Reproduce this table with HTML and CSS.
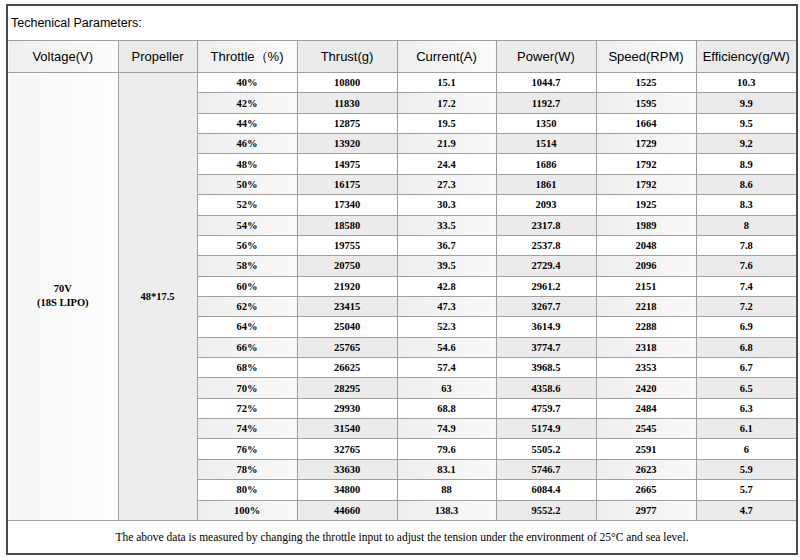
FILE: index.html
```html
<!DOCTYPE html>
<html>
<head>
<meta charset="utf-8">
<link rel="stylesheet" href="styles.css">
</head>
<body>
<table class="params">
<colgroup>
<col class="c1"><col class="c2"><col class="c3"><col class="c4"><col class="c5"><col class="c6"><col class="c7"><col class="c8">
</colgroup>
<tr class="title"><td colspan="8" class="title-cell">Techenical Parameters:</td></tr>
<tr class="head">
<th class="lt">Voltage(V)</th><th class="dk">Propeller</th><th class="lt">Throttle（%)</th><th class="dk">Thrust(g)</th><th class="lt">Current(A)</th><th class="dk">Power(W)</th><th class="lt">Speed(RPM)</th><th class="dk">Efficiency(g/W)</th>
</tr>
<tr class="row"><td rowspan="22" class="volt">70V<br>(18S LIPO)</td><td rowspan="22" class="prop">48*17.5</td><td>40%</td><td>10800</td><td>15.1</td><td>1044.7</td><td>1525</td><td>10.3</td></tr>
<tr class="row ev"><td>42%</td><td>11830</td><td>17.2</td><td>1192.7</td><td>1595</td><td>9.9</td></tr>
<tr class="row"><td>44%</td><td>12875</td><td>19.5</td><td>1350</td><td>1664</td><td>9.5</td></tr>
<tr class="row ev"><td>46%</td><td>13920</td><td>21.9</td><td>1514</td><td>1729</td><td>9.2</td></tr>
<tr class="row"><td>48%</td><td>14975</td><td>24.4</td><td>1686</td><td>1792</td><td>8.9</td></tr>
<tr class="row ev"><td>50%</td><td>16175</td><td>27.3</td><td>1861</td><td>1792</td><td>8.6</td></tr>
<tr class="row"><td>52%</td><td>17340</td><td>30.3</td><td>2093</td><td>1925</td><td>8.3</td></tr>
<tr class="row ev"><td>54%</td><td>18580</td><td>33.5</td><td>2317.8</td><td>1989</td><td>8</td></tr>
<tr class="row"><td>56%</td><td>19755</td><td>36.7</td><td>2537.8</td><td>2048</td><td>7.8</td></tr>
<tr class="row ev"><td>58%</td><td>20750</td><td>39.5</td><td>2729.4</td><td>2096</td><td>7.6</td></tr>
<tr class="row"><td>60%</td><td>21920</td><td>42.8</td><td>2961.2</td><td>2151</td><td>7.4</td></tr>
<tr class="row ev"><td>62%</td><td>23415</td><td>47.3</td><td>3267.7</td><td>2218</td><td>7.2</td></tr>
<tr class="row"><td>64%</td><td>25040</td><td>52.3</td><td>3614.9</td><td>2288</td><td>6.9</td></tr>
<tr class="row ev"><td>66%</td><td>25765</td><td>54.6</td><td>3774.7</td><td>2318</td><td>6.8</td></tr>
<tr class="row"><td>68%</td><td>26625</td><td>57.4</td><td>3968.5</td><td>2353</td><td>6.7</td></tr>
<tr class="row ev"><td>70%</td><td>28295</td><td>63</td><td>4358.6</td><td>2420</td><td>6.5</td></tr>
<tr class="row"><td>72%</td><td>29930</td><td>68.8</td><td>4759.7</td><td>2484</td><td>6.3</td></tr>
<tr class="row ev"><td>74%</td><td>31540</td><td>74.9</td><td>5174.9</td><td>2545</td><td>6.1</td></tr>
<tr class="row"><td>76%</td><td>32765</td><td>79.6</td><td>5505.2</td><td>2591</td><td>6</td></tr>
<tr class="row ev"><td>78%</td><td>33630</td><td>83.1</td><td>5746.7</td><td>2623</td><td>5.9</td></tr>
<tr class="row"><td>80%</td><td>34800</td><td>88</td><td>6084.4</td><td>2665</td><td>5.7</td></tr>
<tr class="row ev"><td>100%</td><td>44660</td><td>138.3</td><td>9552.2</td><td>2977</td><td>4.7</td></tr>
<tr class="foot"><td colspan="8" class="foot-cell">The above data is measured by changing the throttle input to adjust the tension under the environment of 25°C and sea level.</td></tr>
</table>
</body>
</html>
```
FILE: styles.css
```css
html, body {
  margin: 0;
  padding: 0;
  background: #fff;
}
body {
  padding: 4px 3px 0 6px;
}
.params {
  border-collapse: collapse;
  table-layout: fixed;
  width: 791px;
  border: 2px solid #4a4a4a;
  color: #000;
}
.c1 { width: 111px; }
.c2 { width: 79px; }
.c3 { width: 100px; }
.c4 { width: 100px; }
.c5 { width: 99px; }
.c6 { width: 100px; }
.c7 { width: 100px; }
.c8 { width: 101px; }
.params td, .params th {
  border: 1px solid #a0a0a0;
  padding: 0;
  text-align: center;
  vertical-align: middle;
}
.params .title-cell {
  height: 34px;
  text-align: left;
  padding-left: 3px;
  font-family: "Liberation Sans", Arial, sans-serif;
  font-size: 12.5px;
  font-weight: normal;
  border-color: #4a4a4a;
  border-bottom: 1px solid #a0a0a0;
}
.head th {
  height: 31px;
  font-family: "Liberation Sans", Arial, sans-serif;
  font-size: 13px;
  font-weight: normal;
}
.lt {
  background: linear-gradient(90deg, #efefef, #fbfbfb);
}
.dk {
  background: #ebebeb;
}
.row td {
  font-family: "Liberation Serif", "Times New Roman", serif;
  font-weight: bold;
  font-size: 10.5px;
  height: 19.36px;
}
.row .volt {
  background: linear-gradient(90deg, #f6f6f6, #fdfdfd);
  line-height: 14px;
}
.row .prop {
  background: #ededed;
}
.ev td:nth-last-child(6),
.ev td:nth-last-child(4),
.ev td:nth-last-child(2) {
  background: linear-gradient(90deg, #eeeeee, #f9f9f9);
}
.ev td:nth-last-child(5),
.ev td:nth-last-child(3),
.ev td:nth-last-child(1) {
  background: #ebebeb;
}
.params .foot-cell {
  height: 32px;
  font-family: "Liberation Serif", "Times New Roman", serif;
  font-weight: normal;
  font-size: 11.5px;
  border-color: #4a4a4a;
  border-top: 1px solid #a0a0a0;
}
```
